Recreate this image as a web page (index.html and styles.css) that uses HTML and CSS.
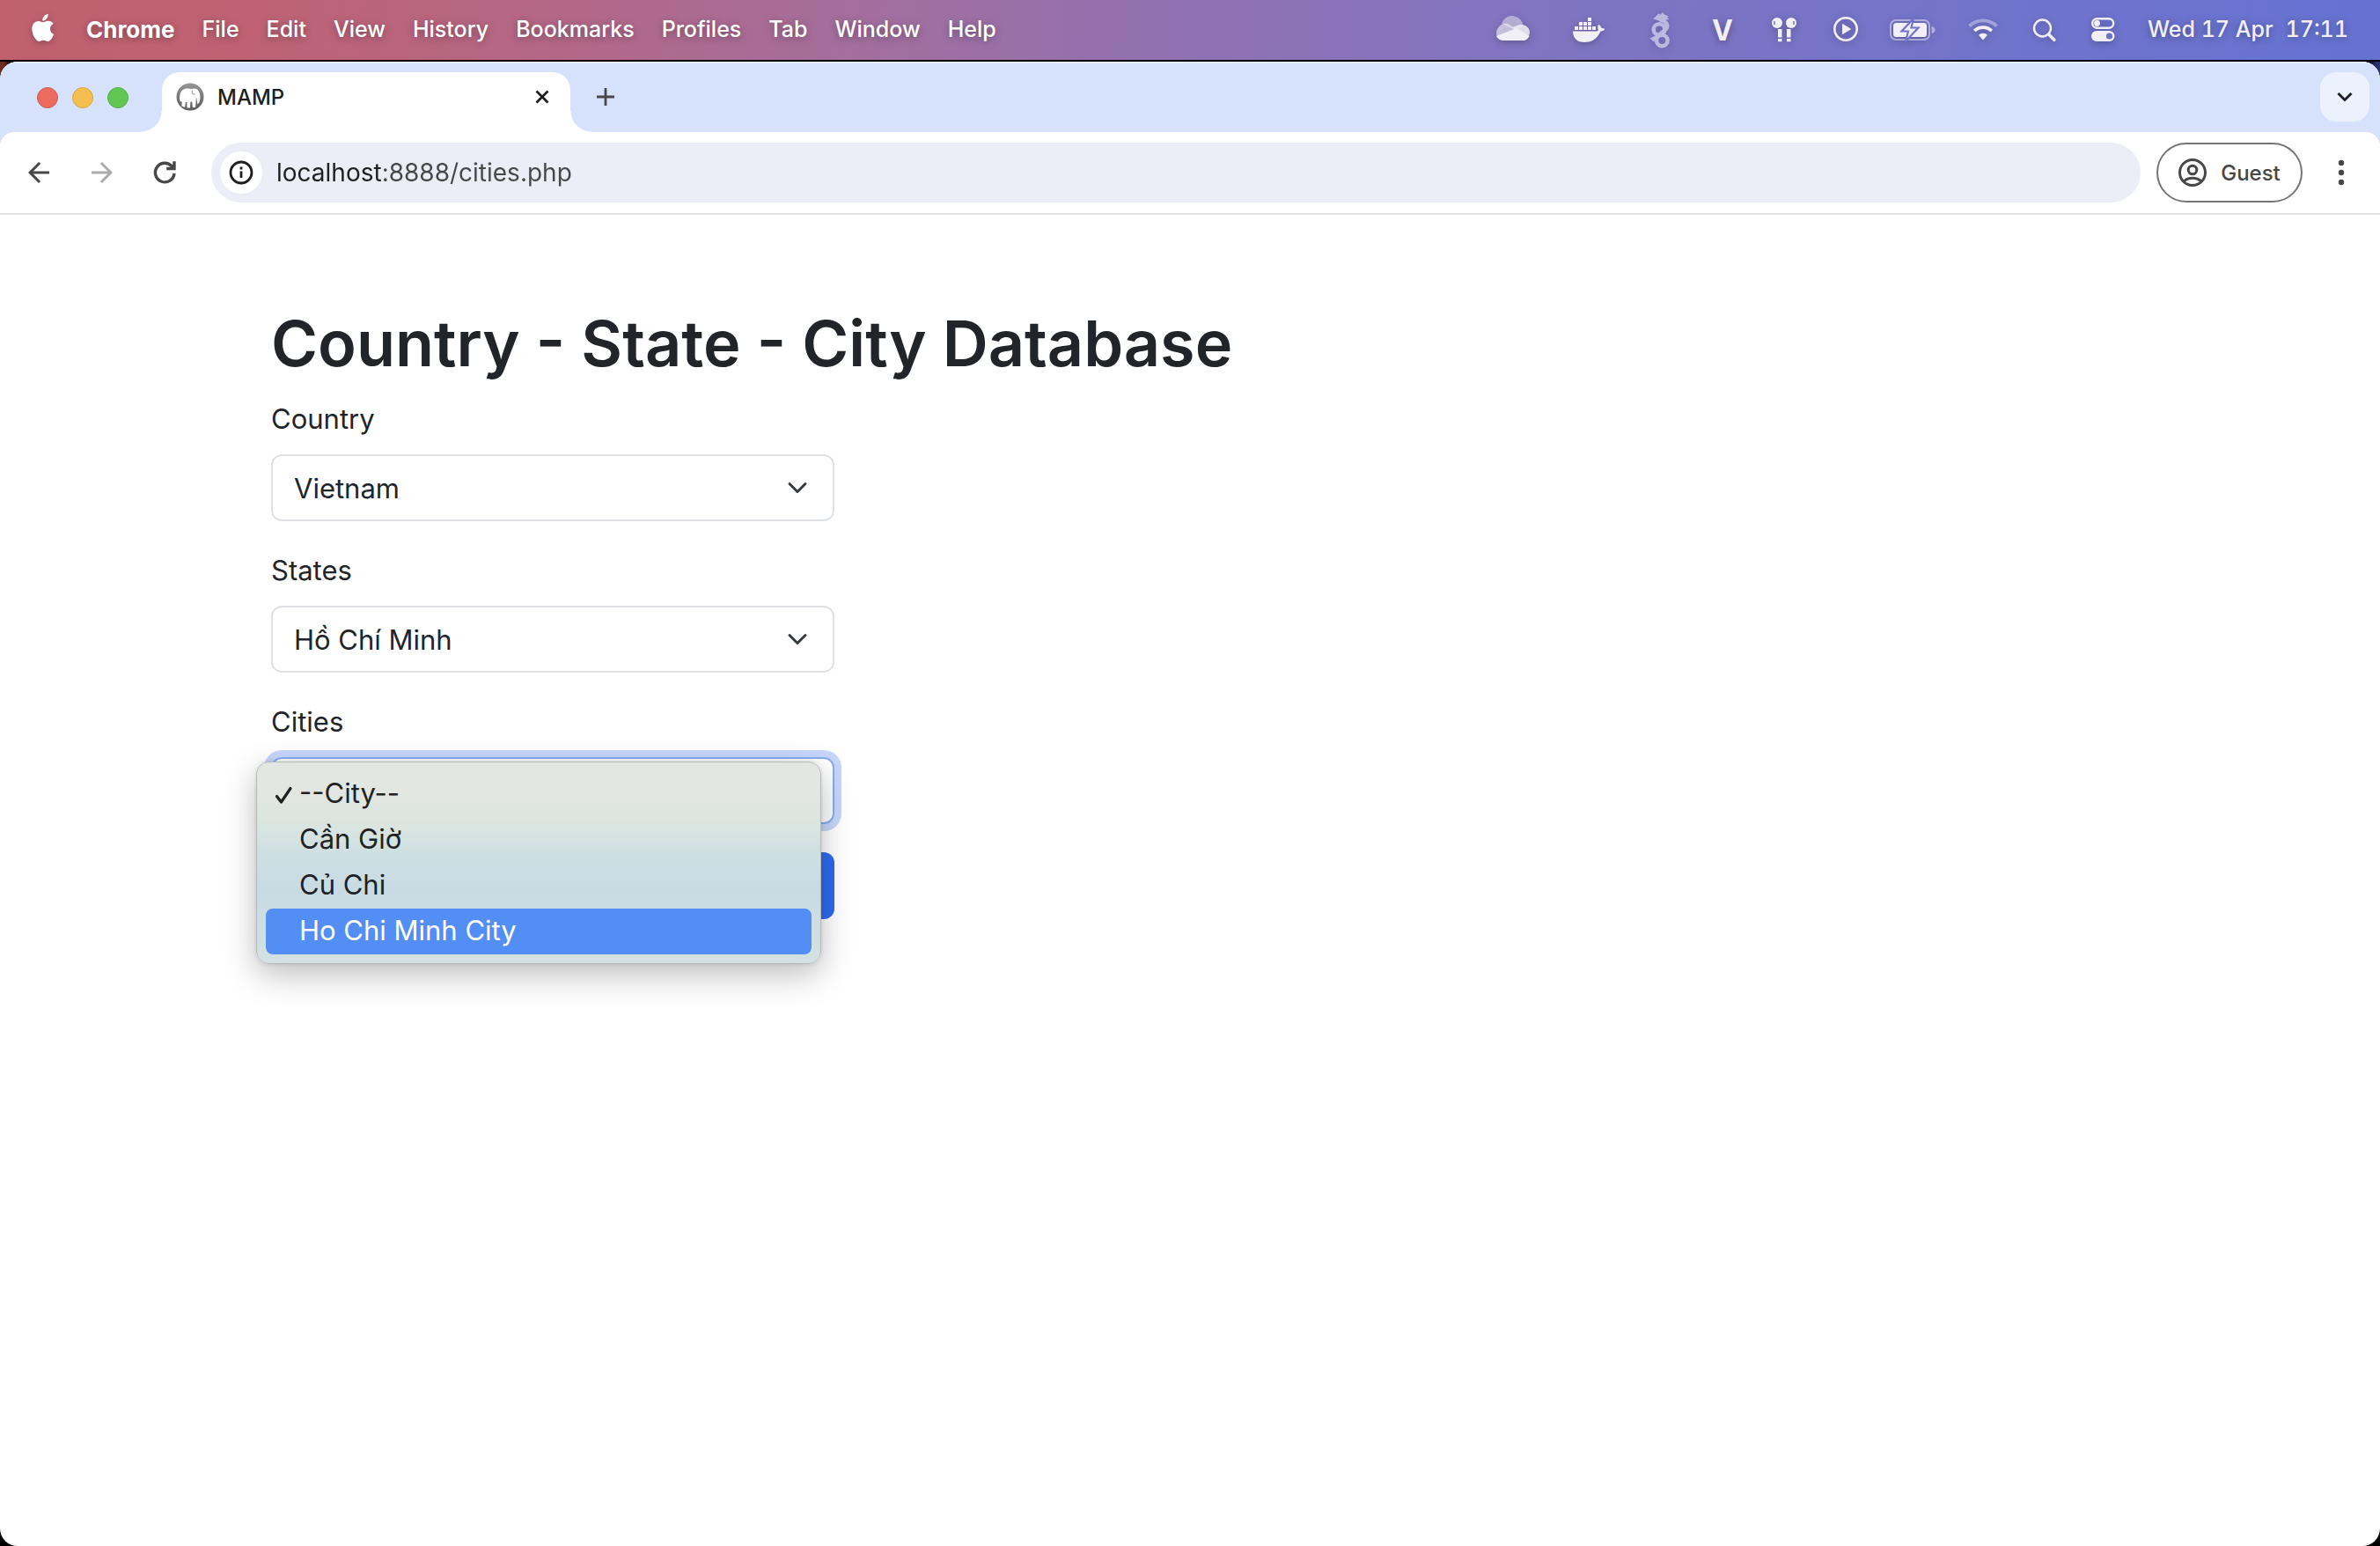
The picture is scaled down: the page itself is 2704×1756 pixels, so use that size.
FILE: index.html
```html
<!DOCTYPE html>
<html lang="en">
<head>
<meta charset="utf-8">
<meta name="viewport" content="width=device-width, initial-scale=1">
<title>MAMP</title>
<link rel="stylesheet" href="styles.css">
</head>
<body>
<header class="menubar">
  <nav class="menus" aria-label="Menu bar">
    <button class="menu" type="button" aria-label="Apple">
      <svg class="glyph" width="32" height="68" viewBox="34 0 32 68" fill="#fff"><path d="M54.600 17c.2 2.100-.6 3.900-1.700 5.200-1.100 1.400-2.900 2.400-4.700 2.300-.2-2 .7-3.900 1.700-5.100 1.100-1.300 3.100-2.300 4.700-2.400zM60.500 27.900c-.2.100-3.500 2-3.500 5.800 0 4.500 4 6.100 4.100 6.100-.1.200-.6 2.300-2.100 4.400-1.300 1.900-2.600 3.800-4.700 3.800s-2.600-1.200-5-1.200c-2.300 0-3.100 1.200-5 1.200-2 0-3.300-1.800-4.800-3.900-1.700-2.500-3.200-6.400-3.200-10.100 0-6 3.900-9.100 7.700-9.100 2 0 3.700 1.300 5 1.300 1.200 0 3.100-1.400 5.500-1.400.9 0 4.100.1 6 3.100z"/></svg>
    </button>
    <button class="menu menu-app" type="button">Chrome</button>
    <button class="menu" type="button">File</button>
    <button class="menu" type="button">Edit</button>
    <button class="menu" type="button">View</button>
    <button class="menu" type="button">History</button>
    <button class="menu" type="button">Bookmarks</button>
    <button class="menu" type="button">Profiles</button>
    <button class="menu" type="button">Tab</button>
    <button class="menu" type="button">Window</button>
    <button class="menu" type="button">Help</button>
  </nav>
  <div class="status">
    <svg class="glyph" width="50" height="68" viewBox="1697 0 50 68">
      <path d="M1708 27a12.500 12.500 0 0 1 24.500 3.500L1722 33z" fill="#f1f0f8" opacity=".5"/>
      <path d="M1703.500 42.500A10.500 10.500 0 0 1 1716 27.500l13 8z" fill="#f1f0f8" opacity=".65"/>
      <path d="M1719 31.500l8.500-3.300c7-1.500 12.500 2.800 12.500 9l-1 3z" fill="#f1f0f8" opacity=".85"/>
      <path d="M1702 41l23-9 14.500 8.500c-1 3.500-4 5.500-7 5.500h-22c-4 0-7-2-8.500-5z" fill="#f1f0f8"/>
    </svg>
    <svg class="glyph" width="50" height="68" viewBox="1782 0 50 68" fill="#f1f0f8">
      <path d="M1805 20h4v4h-4zM1795 25h4v4h-4zM1800 25h4v4h-4zM1805 25h4v4h-4zM1790 30h4v4h-4zM1795 30h4v4h-4zM1800 30h4v4h-4zM1805 30h4v4h-4zM1810 30h4v4h-4z"/>
      <path d="M1788 35.500h25c2.500 0 3.500-.5 4-1.500-1-2-1-4 .2-6.200 2 1.200 3 2.700 3.200 4.200 1.500-.3 2.600 0 3.900.8-.8 1.700-2.300 2.700-4.800 2.700-3.500 8-9.500 12.500-18.500 12.500-8 0-13-4.500-13-12.500z"/>
    </svg>
    <svg class="glyph" width="38" height="68" viewBox="1868 0 38 68" opacity=".55">
      <g fill="none" stroke="#f1f0f8" stroke-width="4.500" stroke-linecap="round">
        <circle cx="1886" cy="33.500" r="6.300"/>
        <circle cx="1889.300" cy="46" r="6.300"/>
        <path d="M1887.500 22.500c5 1 8.500 4 7.500 8.500-1 4-8 6-11.500 11.500"/>
      </g>
      <path d="M1879 21.500l4-3.500 2-2.500 3 1 1.500-2.500 2.500 2.500 5 2-2 1.200 2.500 2.300-5 .5-3 2.500-5-2z" fill="#f1f0f8"/>
      <path d="M1875.500 43.500c3-1 4.500-2.500 7-3l1 4c-2 .5-2.500 2-3.500 3z" fill="#f1f0f8"/>
    </svg>
    <span class="letter">V</span>
    <svg class="glyph" width="34" height="68" viewBox="2010 0 34 68">
      <g fill="#f1f0f8">
        <circle cx="2020" cy="26" r="6"/><circle cx="2036" cy="26" r="6"/>
        <path d="M2021 33h4.500v9.500h-4.500zM2031 33h4.500v9.500h-4.500zM2021 44h4.500v3.200h-4.500zM2031 44h4.500v3.200h-4.500z"/>
      </g>
      <path d="M2017 24v4M2039 24v4" stroke="#7573c8" stroke-width="1.500"/>
    </svg>
    <svg class="glyph" width="32" height="68" viewBox="2080 0 32 68">
      <circle cx="2098" cy="33" r="12.700" fill="none" stroke="#f1f0f8" stroke-width="2.600"/>
      <path d="M2094.500 27.500v11l9-5.500z" fill="#f1f0f8" stroke="#f1f0f8" stroke-linejoin="round"/>
    </svg>
    <svg class="glyph" width="52" height="68" viewBox="2148 0 52 68">
      <rect x="2149" y="23" width="44" height="22" rx="6" fill="none" stroke="#f1f0f8" stroke-width="2" opacity=".5"/>
      <path d="M2195.500 30c3 .5 4 2 4 4s-1 3.500-4 4z" fill="#f1f0f8" opacity=".5"/>
      <rect x="2152" y="26" width="38" height="16" rx="3.500" fill="#f1f0f8"/>
      <path d="M2175 21l-13.500 14.500h7.500l-3 11.500 14.500-15.500h-8z" fill="#f1f0f8" stroke="#7373c9" stroke-width="2.200"/>
    </svg>
    <svg class="glyph" width="36" height="68" viewBox="2236 0 36 68" fill="none" stroke="#f1f0f8">
      <path d="M2238.500 29.500a22.500 22.500 0 0 1 31 0" stroke-width="3.800" opacity=".4"/>
      <path d="M2244.200 35a14.200 14.200 0 0 1 19.600 0" stroke-width="3.800"/>
      <path d="M2249 39.800a7 7 0 0 1 10 0l-5 5.800z" fill="#f1f0f8" stroke="none"/>
    </svg>
    <svg class="glyph" width="30" height="68" viewBox="2308 0 30 68" fill="none" stroke="#f1f0f8" stroke-linecap="round">
      <circle cx="2321.500" cy="32" r="9.500" stroke-width="2.400"/>
      <path d="M2328.800 39.300l6 6" stroke-width="3.600"/>
    </svg>
    <svg class="glyph" width="31" height="68" viewBox="2374 0 31 68">
      <rect x="2378.200" y="21.200" width="24" height="10.600" rx="5.300" fill="none" stroke="#f1f0f8" stroke-width="2.400"/>
      <circle cx="2383.500" cy="26.500" r="3.400" fill="#f1f0f8"/>
      <rect x="2377" y="35" width="26.500" height="12" rx="6" fill="#f1f0f8"/>
      <circle cx="2397.500" cy="41" r="3.600" fill="#6b72cd"/>
    </svg>
    <time class="clock"><span>Wed 17 Apr</span><span>17:11</span></time>
  </div>
</header>

<div class="desktop">
<div class="window">
  <div class="tabstrip">
    <div class="lights">
      <button class="light light-close" type="button" aria-label="Close window"></button>
      <button class="light light-min" type="button" aria-label="Minimise window"></button>
      <button class="light light-zoom" type="button" aria-label="Zoom window"></button>
    </div>
    <div class="tab">
      <svg width="32" height="32" viewBox="0 0 32 32">
        <defs><linearGradient id="ring" x1="0" y1="0" x2="0" y2="1"><stop offset="0" stop-color="#959595"/><stop offset="1" stop-color="#5c5c5c"/></linearGradient></defs>
        <circle cx="16" cy="16" r="15.500" fill="url(#ring)"/>
        <path d="M4.500 21c-1-6 0-13 5.500-14 3-.8 5-.5 8 0 3-1.200 6.500-.5 8 3 1.800 3 2 8 .5 12l-2 2.500c-.8-3-.5-5.500-1.500-8-.5 4-.5 8-1 11.500h-3.200l-.6-6.500h-1.800l-.4 7h-3.600v-6.500h-1.500l-.8 6-3.600-1.500v-5z" fill="#fff"/>
        <path d="M18.500 8.500c-1 3 .5 5 3 4.500" fill="none" stroke="#aaa" stroke-width="1.200"/>
      </svg>
      <span class="tab-title">MAMP</span>
      <button class="icon-button" type="button" aria-label="Close tab">
        <svg width="16" height="16" viewBox="0 0 16 16" stroke="#1f1f1f" stroke-width="2.800"><path d="M1.500 1.500l13 13M14.500 1.500l-13 13"/></svg>
      </button>
    </div>
    <button class="icon-button new-tab" type="button" aria-label="New tab">
      <svg width="20" height="20" viewBox="0 0 20 20" stroke="#474747" stroke-width="2.800"><path d="M10 0v20M0 10h20"/></svg>
    </button>
    <button class="icon-button tab-search" type="button" aria-label="Search tabs">
      <svg width="20" height="20" viewBox="0 0 20 20" fill="none" stroke="#1f1f1f" stroke-width="3"><path d="M2.500 6l7.500 7.500L17.500 6"/></svg>
    </button>
  </div>

  <div class="toolbar">
    <div class="nav">
      <button class="icon-button" type="button" aria-label="Back">
        <svg width="36" height="36" viewBox="0 0 24 24" fill="#474747"><path d="M7.800 13l5.600 5.600L12 20l-8-8 8-8 1.400 1.400L7.800 11H20v2z"/></svg>
      </button>
      <button class="icon-button" type="button" aria-label="Forward">
        <svg width="36" height="36" viewBox="0 0 24 24" fill="#ababab"><path d="M16.200 13l-5.600 5.600L12 20l8-8-8-8-1.400 1.400 5.600 5.600H4v2z"/></svg>
      </button>
      <button class="icon-button" type="button" aria-label="Reload">
        <svg width="36" height="36" viewBox="0 0 36 36" fill="none" stroke="#474747" stroke-width="3.400"><path d="M28 19A10.800 10.800 0 1 1 25 10.500l2.500 2.500M28 5.300v8.200H19.200"/></svg>
      </button>
    </div>
    <div class="omnibox">
      <button class="icon-button site-info" type="button" aria-label="View site information">
        <svg width="28" height="28" viewBox="0 0 28 28" fill="none" stroke="#1f1f1f" stroke-width="2.800"><circle cx="14" cy="14" r="12"/><path d="M14 12.500v7.500M14 7.500v3"/></svg>
      </button>
      <input class="url" type="text" aria-label="Address" value="localhost:8888/cities.php">
    </div>
    <button class="guest" type="button">
      <svg width="32" height="32" viewBox="0 0 32 32" fill="none" stroke="#474747" stroke-width="3"><circle cx="16" cy="16" r="14.500"/><circle cx="16" cy="13" r="4.800"/><path d="M6 26c5.500-5 14.500-5 20 0"/></svg>
      <span>Guest</span>
    </button>
    <button class="icon-button" type="button" aria-label="Chrome menu">
      <svg width="36" height="36" viewBox="0 0 36 36" fill="#474747"><circle cx="18" cy="7" r="3.200"/><circle cx="18" cy="18" r="3.200"/><circle cx="18" cy="29" r="3.200"/></svg>
    </button>
  </div>

  <main class="page">
    <h1 class="title">Country - State - City Database</h1>
    <form class="form">
      <div class="field">
        <label class="label" for="country">Country</label>
        <div class="control">
          <select class="select" id="country"><option>Vietnam</option></select>
          <svg class="caret" width="24" height="24" viewBox="0 0 16 16" fill="none" stroke="#343a40" stroke-width="2" stroke-linecap="round" stroke-linejoin="round"><path d="M2 5l6 6 6-6"/></svg>
        </div>
      </div>
      <div class="field">
        <label class="label" for="state">States</label>
        <div class="control">
          <select class="select" id="state"><option>Hồ Chí Minh</option></select>
          <svg class="caret" width="24" height="24" viewBox="0 0 16 16" fill="none" stroke="#343a40" stroke-width="2" stroke-linecap="round" stroke-linejoin="round"><path d="M2 5l6 6 6-6"/></svg>
        </div>
      </div>
      <div class="field">
        <label class="label" for="city">Cities</label>
        <div class="control">
          <select class="select select-open" id="city"></select>
          <ul class="popup" role="listbox" aria-label="Cities">
            <li class="option" role="option" aria-selected="true">
              <svg class="tick" width="22" height="24" viewBox="0 0 22 24" fill="none" stroke="#1f2224" stroke-width="3.200" stroke-linecap="round" stroke-linejoin="round"><path d="M2.500 13.500l5 6.500L18 4.500"/></svg>
              --City--
            </li>
            <li class="option" role="option">Cần Giờ</li>
            <li class="option" role="option">Củ Chi</li>
            <li class="option option-active" role="option">Ho Chi Minh City</li>
          </ul>
        </div>
      </div>
      <button class="submit" type="button" aria-label="Submit"></button>
    </form>
  </main>
</div>
</div>
</body>
</html>
```
FILE: styles.css
```css
* { box-sizing: border-box; }

body {
  margin: 0;
  min-height: 100vh;
  display: flex;
  flex-direction: column;
  background: #000;
  color: #212529;
  font-family: Inter, "Liberation Sans", sans-serif;
}

button, input, select { font: inherit; color: inherit; }
svg { display: block; flex: none; }

/* System menu bar */
.menubar {
  height: 68px;
  display: flex;
  justify-content: space-between;
  padding: 0 36px 0 34px;
  background: linear-gradient(97deg, #c1616f 0%, #bf6273 10%, #b26889 25%, #a16fa1 38%, #9071b2 50%, #8374bf 62%, #7474c9 80%, #6572d2 100%);
  font-size: 25px;
  font-weight: 500;
  color: #fff;
  text-shadow: 0 2px 8px rgba(0, 0, 0, .35);
}
.menus, .status { display: flex; align-items: center; }
.menus { gap: 31px; }
.menu { border: 0; padding: 0 0 2px; background: none; text-shadow: inherit; }
.menu-app { padding-left: 1px; font-size: 26px; font-weight: 700; }
.glyph { filter: drop-shadow(0 2px 4px rgba(0, 0, 0, .25)); }
.status { gap: 36px; color: #f1f0f8; }
.letter { width: 32px; text-align: center; font-size: 32px; font-weight: 700; }
.clock {
  width: 228px;
  padding-bottom: 2px;
  display: flex;
  justify-content: space-between;
  font-variant-numeric: tabular-nums;
}

/* Browser window */
.desktop {
  flex: 1;
  display: flex;
  padding-top: 2px;
  background: linear-gradient(#000 0 2px, transparent 2px), linear-gradient(90deg, #6b2d22 0 4px, #000 14px calc(100% - 14px), #27336f calc(100% - 4px)) top / 100% 16px no-repeat;
}
.window {
  flex: 1;
  min-width: 0;
  border-radius: 20px;
  background: #fff;
  overflow: hidden;
}
.tabstrip {
  height: 96px;
  margin-bottom: -16px;
  padding: 12px 12px 16px 42px;
  display: flex;
  align-items: flex-start;
  background: #d6e1fc;
  box-shadow: inset 0 2px #e3ebfd;
}
.icon-button {
  border: 0;
  padding: 0;
  background: none;
  display: flex;
  align-items: center;
  justify-content: center;
}
.lights { height: 58px; display: flex; align-items: center; gap: 16px; margin-right: 38px; }
.light { width: 24px; height: 24px; padding: 0; border: 1px solid; border-radius: 50%; }
.light-close { background: #ec6b5f; border-color: #d5584c; }
.light-min { background: #f5bf4f; border-color: #dba63a; }
.light-zoom { background: #62c655; border-color: #4fae41; }

.tab {
  position: relative;
  width: 464px;
  height: 68px;
  padding: 0 24px 12px 16px;
  display: flex;
  align-items: center;
  background: #fff;
  border-radius: 20px 20px 0 0;
  font-size: 24px;
  font-weight: 500;
  color: #1f1f1f;
}
.tab::before, .tab::after {
  content: "";
  position: absolute;
  bottom: 0;
  width: 24px;
  height: 24px;
}
.tab::before { right: 100%; background: radial-gradient(circle at 0 0, transparent 23px, #fff 24px); }
.tab::after { left: 100%; background: radial-gradient(circle at 100% 0, transparent 23px, #fff 24px); }
.tab-title { flex: 1; padding-left: 15px; }
.new-tab { height: 56px; margin-left: 30px; }
.tab-search { width: 56px; height: 56px; margin-left: auto; border-radius: 18px; background: #ebf2fd; }

.toolbar {
  position: relative;
  height: 94px;
  padding: 0 26px;
  display: flex;
  align-items: center;
  background: #fff;
  border-bottom: 2px solid #e1e1e1;
  border-radius: 16px 16px 0 0;
}
.nav { display: flex; gap: 36px; margin-right: 34px; }
.omnibox {
  flex: 1;
  height: 68px;
  margin-right: 18px;
  padding: 0 10px;
  display: flex;
  align-items: center;
  gap: 16px;
  background: #ebeef7;
  border-radius: 34px;
}
.site-info { width: 48px; height: 48px; border-radius: 50%; background: #fff; }
.url {
  flex: 1;
  min-width: 0;
  border: 0;
  padding: 0;
  font-size: 28px;
  line-height: 40px;
  outline: 0;
  color: transparent;
  background: linear-gradient(90deg, #1f1f1f 0 121px, #474747 121px) text;
}
.guest {
  width: 166px;
  height: 68px;
  margin-right: 26px;
  padding: 0;
  display: flex;
  align-items: center;
  justify-content: center;
  gap: 16px;
  border: 2px solid #757575;
  border-radius: 34px;
  background: #fff;
  font-size: 24px;
  font-weight: 500;
  color: #474747;
}

/* Page content */
.page { max-width: 2088px; margin: 0 auto; padding: 98px 0 48px; }
.title { margin: 0 0 14px; font-size: 72px; line-height: 96px; font-weight: 600; }
.form { max-width: 640px; font-size: 31px; }
.field { margin-bottom: 32px; }
.label { display: block; margin-bottom: 16px; line-height: 48px; }
.control { position: relative; }
.select {
  display: block;
  width: 100%;
  height: 76px;
  padding: 0 72px 0 24px;
  appearance: none;
  border: 2px solid #dee2e6;
  border-radius: 12px;
  background: #fff;
}
.caret { position: absolute; top: 26px; right: 30px; pointer-events: none; }
.select-open { border-color: #86aef5; box-shadow: 0 0 0 8px #c7d6fb; }
.popup {
  position: absolute;
  z-index: 1;
  top: 5px;
  left: -17px;
  right: 15px;
  margin: 0;
  padding: 10px;
  list-style: none;
  border: 1px solid #b4babb;
  border-radius: 14px;
  background: linear-gradient(180deg, #e5e6e3 0%, #e2e6e1 16%, #dae5e0 32%, #cddfe2 47%, #c8dbe3 64%, #d3e2e1 100%);
  box-shadow: 0 12px 36px rgba(0, 0, 0, .26), 0 0 4px rgba(0, 0, 0, .12);
}
.option {
  position: relative;
  padding: 0 0 2px 38px;
  line-height: 50px;
  color: #1f2224;
}
.option-active { background: #538ef4; border-radius: 8px; color: #fff; }
.tick { position: absolute; left: 10px; top: 15px; }
.submit {
  display: block;
  width: 100%;
  height: 76px;
  border: 0;
  border-radius: 12px;
  background: #2f6af0;
}
```
